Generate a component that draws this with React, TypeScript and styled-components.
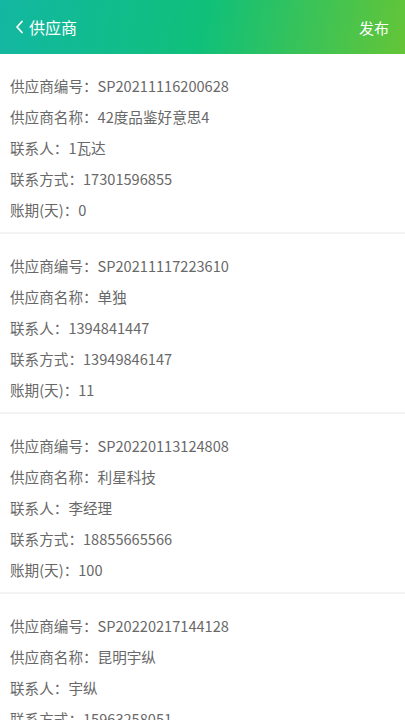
import React from 'react'
import styled, { createGlobalStyle } from 'styled-components'

const GlobalStyle = createGlobalStyle`
  * { box-sizing: border-box; }
  body { margin: 0; font-family: "Noto Sans CJK SC", "Noto Sans", sans-serif; background: #fff; color: #666; }
`

const Page = styled.div`
  width: 100%;
  min-height: 720px;
  background: #fff;
`

const Header = styled.header`
  height: 54px;
  display: flex;
  align-items: center;
  justify-content: space-between;
  padding: 0 16px 0 15px;
  background: linear-gradient(100deg, #13b7a2 0%, #0fc07a 50%, #64c537 100%);
  color: #fff;
`

const Back = styled.div`
  display: flex;
  align-items: center;
  gap: 5px;
  font-size: 16px;
`

const Action = styled.div`
  font-size: 15px;
`

const Card = styled.div`
  padding: 16px 10px 7px;
  border-bottom: 2px solid #f3f3f3;
`

const Row = styled.div`
  height: 31px;
  line-height: 31px;
  font-size: 14.6px;
  color: #686868;
  white-space: nowrap;
`

type Supplier = {
  code: string
  name: string
  contact: string
  phone: string
  term?: string
}

const suppliers: Supplier[] = [
  { code: 'SP20211116200628', name: '42度品鉴好意思4', contact: '1瓦达', phone: '17301596855', term: '0' },
  { code: 'SP20211117223610', name: '单独', contact: '1394841447', phone: '13949846147', term: '11' },
  { code: 'SP20220113124808', name: '利星科技', contact: '李经理', phone: '18855665566', term: '100' },
  { code: 'SP20220217144128', name: '昆明宇纵', contact: '宇纵', phone: '15963258051', term: '0' },
]

const Chevron = () => (
  <svg width="9" height="16" viewBox="0 0 9 16" fill="none">
    <path d="M7 2.5 L2 8 L7 13.5" stroke="#fff" strokeWidth="1.8" strokeLinecap="round" strokeLinejoin="round" />
  </svg>
)

const App: React.FC = () => {
  return (
    <>
      <GlobalStyle />
      <Page>
        <Header>
          <Back>
            <Chevron />
            <span>供应商</span>
          </Back>
          <Action>发布</Action>
        </Header>

        {suppliers.map((s) => (
          <Card key={s.code}>
            <Row>供应商编号：{s.code}</Row>
            <Row>供应商名称：{s.name}</Row>
            <Row>联系人：{s.contact}</Row>
            <Row>联系方式：{s.phone}</Row>
            <Row>账期(天)：{s.term}</Row>
          </Card>
        ))}
      </Page>
    </>
  )
}

export default App
